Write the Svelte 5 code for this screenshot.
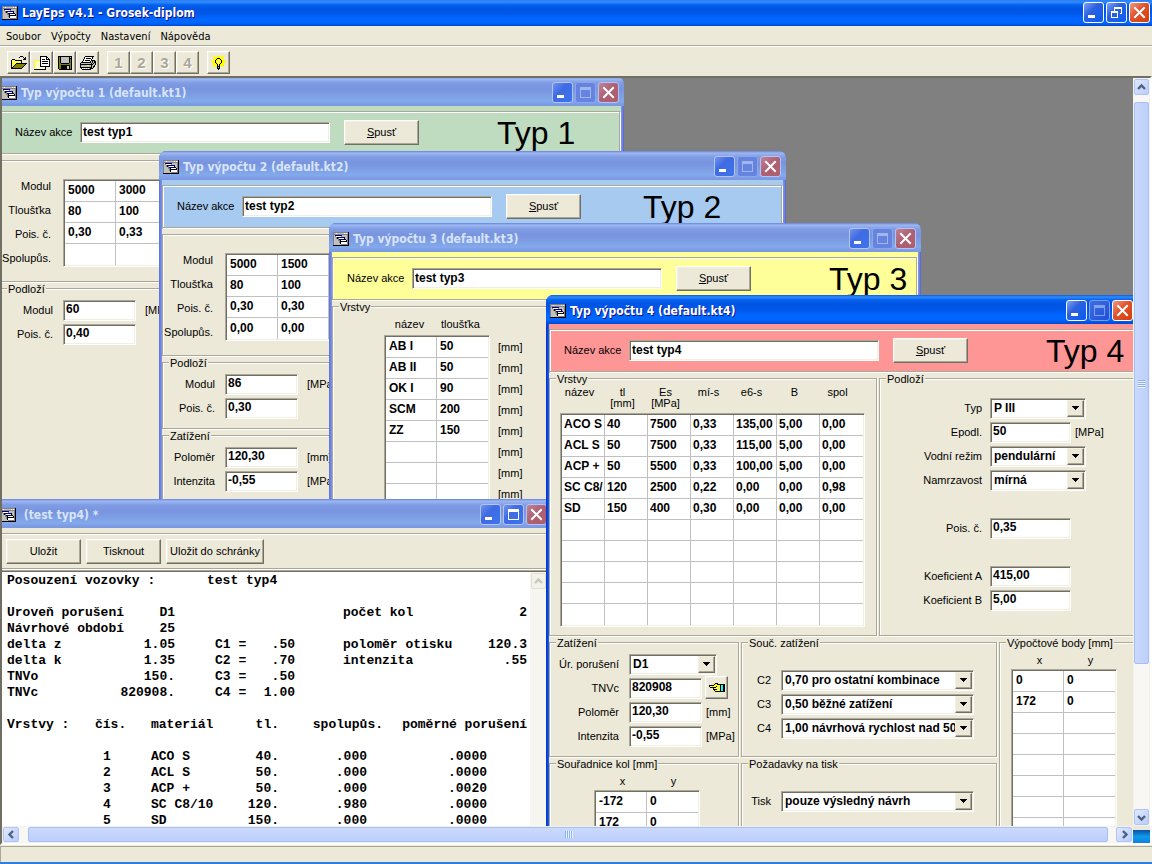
<script lang="ts">
  interface Option {
    id: string;
    label: string;
    value: string;
  }

  const palette: Record<string, string> = {
    k: '#000000',
    w: '#ffffff',
    g: '#c0c0c0',
    d: '#808080',
    o: '#808000',
    y: '#ffff00',
    l: '#ffffa0',
    n: '#000080',
    c: '#00ffff',
  };

  // small bitmaps, one character per pixel
  const sprites: Record<string, string[]> = {
    app: [
      'dddddddddddddddk',
      'dggwgggggggwgwgk',
      'dddddddddddddddk',
      'dgnnnnnnngggggdk',
      'dgdwwwwwdgggggdk',
      'dggdknnnnnnkggdk',
      'dggdkdwwwwwkggdk',
      'dggggdnnnnnnkgdk',
      'dggggddkwwwwwkdk',
      'dgggggdkkkkkkkdk',
      'dgggggdkwwwwwwdk',
      'dggggggkwwwwwwdk',
      'dgggggggdddddddk',
      'kkkkkkkkkkkkkkkk',
    ],
    open: [
      '.........kkk....',
      '........k...k.k.',
      '.............kk.',
      '.kkk........kkk.',
      'klylkkkkkkk.....',
      'kylylylylyk.....',
      'klylylylylk.....',
      'kylylkkkkkkkkkkk',
      'klylkoooooooook.',
      'kylkoooooooook..',
      'klkoooooooook...',
      'kkoooooooook....',
      'kkkkkkkkkkk.....',
    ],
    reopen: [
      '......kkkkkkk...',
      '......kwwwwwkk..',
      '......kwwwwwkwk.',
      '......kwkkkwkkkk',
      '.yyyy.kwwwwwwwwk',
      'ylwlwykwkkkkkkwk',
      'ywlwlwkwwwwwwwwk',
      'ylwlwlkwkkkkkkwk',
      'ywlwlwkwwwwwwwwk',
      'ylwlwlkwwwwwwwwk',
      'ywlwlwkkkkkkkkkk',
      'ylwlwlwlwlwk....',
      'ywlwlwlwlwlk....',
      'kkkkkkkkkkkk....',
    ],
    save: [
      'kkkkkkkkkkkkkk',
      'kokggggggggkgk',
      'kokggggggggkkk',
      'kokggggggggkok',
      'kokggggggggkok',
      'kokggggggggkok',
      'kokggggggggkok',
      'kookkkkkkkkook',
      'kooooooooooook',
      'kookkkkkkkkkok',
      'kookkkkkkggkok',
      'kookkkkkkggkok',
      'kookkkkkkggkok',
      '.kkkkkkkkkkkkk',
    ],
    print: [
      '.....kkkkkkkkk..',
      '....kwwwwwwwk...',
      '....kwkkkkkwk...',
      '...kwwwwwwwk....',
      '...kwkkkkkwkkkk.',
      '..kwwwwwwwkgkgkk',
      '.kkkkkkkkkkgkgkk',
      'kggggggggggkgkgk',
      'kkkkkkkkkkkkkggk',
      'kggggggyyggkggk.',
      'kggggggggggkgkk.',
      'kkkkkkkkkkkkgk..',
      '.kwgwgwgwgkkk...',
      '..kkkkkkkkk.....',
    ],
    bulb: [
      '.......y.......',
      '..yy..yyy..yy..',
      '..yyyyyyyyyyy..',
      '...yyykkkyyy...',
      '..yyykyyykyyy..',
      '.yyykyylyykyyy.',
      'yyyykylylykyyyy',
      '.yyykyylyykyyy.',
      '..yyykylykyyy..',
      '..yyyykykyyyy..',
      '..yyyykykyyyy..',
      '..yy..kkk..yy..',
      '......kgk......',
      '......kkk......',
      '.......k.......',
    ],
    hand: [
      '......kkk.......',
      '.....kyykkkkkkkk',
      'kkkkkyyyyyykcckk',
      'kyyyyyykylykcckk',
      '.kkkkkkyylykcckk',
      '....kylylylkcckk',
      '....kkkkylykcckk',
      '.....kylylykcckk',
      '......kkkkkkkkkk',
    ],
  };

  const menu = ['Soubor', 'Výpočty', 'Nastavení', 'Nápověda'];

  const fileTools = [
    { icon: 'open', label: 'Otevřít' },
    { icon: 'reopen', label: 'Otevřít znovu' },
    { icon: 'save', label: 'Uložit' },
    { icon: 'print', label: 'Tisknout' },
  ];

  const windows = [
    { id: 1, title: 'Typ výpočtu 1 (default.kt1)', x: -5, y: -1, w: 627, h: 440 },
    { id: 2, title: 'Typ výpočtu 2 (default.kt2)', x: 157, y: 73, w: 627, h: 380 },
    { id: 3, title: 'Typ výpočtu 3 (default.kt3)', x: 327, y: 145, w: 592, h: 380 },
    { id: 5, title: '\u00a0(test typ4) *', x: -6, y: 421, w: 556, h: 380 },
    { id: 4, title: 'Typ výpočtu 4 (default.kt4)', x: 544, y: 217, w: 592, h: 620 },
  ];

  const layerLabels = ['Modul', 'Tloušťka', 'Pois. č.', 'Spolupůs.'];
  const layers1 = [
    ['5000', '3000', ''],
    ['80', '100', ''],
    ['0,30', '0,33', ''],
    ['', '', ''],
  ];
  const layers2 = [
    ['5000', '1500', ''],
    ['80', '100', ''],
    ['0,30', '0,30', ''],
    ['0,00', '0,00', ''],
  ];
  const layers3 = pad([['AB I', '50'], ['AB II', '50'], ['OK I', '90'], ['SCM', '200'], ['ZZ', '150']], 10, 2);
  const layers4 = pad(
    [
      ['ACO S', '40', '7500', '0,33', '135,00', '5,00', '0,00'],
      ['ACL S', '50', '7500', '0,33', '115,00', '5,00', '0,00'],
      ['ACP +', '50', '5500', '0,33', '100,00', '5,00', '0,00'],
      ['SC C8/', '120', '2500', '0,22', '0,00', '0,00', '0,98'],
      ['SD', '150', '400', '0,30', '0,00', '0,00', '0,00'],
    ],
    10,
    7,
  );
  const heads4 = ['název', 'tl\n[mm]', 'Es\n[MPa]', 'mí-s', 'e6-s', 'B', 'spol'];
  const wheels = pad([['-172', '0'], ['172', '0']], 6, 2);
  const points = pad([['0', '0'], ['172', '0']], 10, 2);

  const coefs: Option[] = [
    { id: 'c2', label: 'C2', value: '0,70 pro ostatní kombinace' },
    { id: 'c3', label: 'C3', value: '0,50 běžné zatížení' },
    { id: 'c4', label: 'C4', value: '1,00 návrhová rychlost nad 50' },
  ];

  const summary = [
    ['Uroveň porušení', 'D1', '', '', 'počet kol', '2'],
    ['Návrhové období', '25', '', '', '', ''],
    ['delta z', '1.05', 'C1 =', '.50', 'poloměr otisku', '120.3'],
    ['delta k', '1.35', 'C2 =', '.70', 'intenzita', '.55'],
    ['TNVo', '150.', 'C3 =', '.50', '', ''],
    ['TNVc', '820908.', 'C4 =', '1.00', '', ''],
  ];
  const results = [
    ['1', 'ACO S', '40.', '.000', '.0000'],
    ['2', 'ACL S', '50.', '.000', '.0000'],
    ['3', 'ACP +', '50.', '.000', '.0020'],
    ['4', 'SC C8/10', '120.', '.980', '.0000'],
    ['5', 'SD', '150.', '.000', '.0000'],
  ];

  function pad(rows: string[][], count: number, cols: number) {
    const empty = Array.from({ length: count - rows.length }, () => Array(cols).fill(''));
    return [...rows, ...empty];
  }
</script>

{#snippet sprite(name: string)}
  {@const rows = sprites[name]}
  <svg class="sprite" width={rows[0].length} height={rows.length} shape-rendering="crispEdges" aria-hidden="true">
    {#each rows as row, y}
      {#each row as px, x}
        {#if px !== '.'}
          <rect {x} {y} width="1" height="1" fill={palette[px]} />
        {/if}
      {/each}
    {/each}
  </svg>
{/snippet}

{#snippet captionButtons(middle: string, disabled: boolean)}
  <div class="caption-buttons">
    <button class="cap" aria-label="Minimalizovat">
      <svg width="19" height="19" shape-rendering="crispEdges"><rect x="4" y="12" width="7" height="3" fill="#fff" /></svg>
    </button>
    <button class="cap" {disabled} aria-label={middle === 'max' ? 'Maximalizovat' : 'Obnovit'}>
      <svg width="19" height="19" shape-rendering="crispEdges" fill="#fff">
        {#if middle === 'max'}
          <path d="M4 4h11v11H4zM5 7v7h9V7z" fill-rule="evenodd" />
        {:else}
          <path d="M7 4h8v7h-2v-1h1V6H8v2H7zM4 8h7v7H4zM5 10v4h5v-4z" fill-rule="evenodd" />
        {/if}
      </svg>
    </button>
    <button class="cap close" aria-label="Zavřít">
      <svg width="19" height="19"><path d="M5 5l9 9M14 5l-9 9" stroke="#fff" stroke-width="2" fill="none" stroke-linecap="square" /></svg>
    </button>
  </div>
{/snippet}

{#snippet chevron(dir: string)}
  <svg class="chevron {dir}" width="9" height="9" aria-hidden="true">
    <path d="M1 6l3.5-3.5L8 6" fill="none" stroke="currentColor" stroke-width="2.4" />
  </svg>
{/snippet}

{#snippet field(id: string, label: string, value: string, unit: string)}
  <div class="field">
    <label for={id}>{label}</label>
    <input {id} {value} />
    {#if unit}<span class="unit">{unit}</span>{/if}
  </div>
{/snippet}

{#snippet combo(id: string, label: string, value: string)}
  <div class="field">
    <label for={id}>{label}</label>
    <div class="combo">
      <select {id}><option>{value}</option></select>
      <span class="arrow">
        <svg width="7" height="4" shape-rendering="crispEdges" aria-hidden="true"><path d="M0 0h7v1H6v1H5v1H4v1H3V3H2V2H1V1H0z" /></svg>
      </span>
    </div>
  </div>
{/snippet}

{#snippet cells(rows: string[][], narrow: boolean)}
  <div class="cells" class:narrow>
    <table>
      <tbody>
        {#each rows as row}
          <tr>
            {#each row as cell}<td>{cell}</td>{/each}
          </tr>
        {/each}
      </tbody>
    </table>
  </div>
{/snippet}

{#snippet banner(n: number)}
  <div class="banner tone-{n}">
    <div class="etched banner-row">
      <label for="name-{n}">Název akce</label>
      <input id="name-{n}" value="test typ{n}" />
      <button class="push"><span><u>S</u>pusť</span></button>
      <span class="kind">Typ {n}</span>
    </div>
  </div>
{/snippet}

{#snippet layerForm(rows: string[][])}
  <div class="etched group layers">
    <div class="row-labels">
      {#each layerLabels as label}<span>{label}</span>{/each}
    </div>
    {@render cells(rows, false)}
  </div>
{/snippet}

<div class="app">
  <header class="titlebar main">
    {@render sprite('app')}
    <h1>LayEps v4.1 - Grosek-diplom</h1>
    {@render captionButtons('restore', false)}
  </header>

  <nav class="menu">
    {#each menu as item}<a href="#{item}">{item}</a>{/each}
  </nav>

  <div class="toolbar">
    <div class="tools">
      {#each fileTools as tool}
        <button class="tool" aria-label={tool.label}>{@render sprite(tool.icon)}</button>
      {/each}
    </div>
    <div class="tools">
      {#each [1, 2, 3, 4] as n}
        <button class="tool" disabled>{n}</button>
      {/each}
    </div>
    <div class="tools">
      <button class="tool" aria-label="Nápověda">{@render sprite('bulb')}</button>
    </div>
  </div>

  <main class="workspace">
    <div class="desktop">
      {#each windows as win (win.id)}
        <section
          class="window"
          class:active={win.id === 4}
          style="left: {win.x}px; top: {win.y}px; width: {win.w}px; height: {win.h}px"
        >
          <div class="titlebar">
            {@render sprite('app')}
            <h2>{win.title}</h2>
            {@render captionButtons('max', win.id !== 5)}
          </div>

          <div class="body body-{win.id}">
            {#if win.id !== 5}
              {@render banner(win.id)}
            {/if}

            {#if win.id === 1}
              {@render layerForm(layers1)}
              <div class="etched group sub">
                <span class="caption">Podloží</span>
                {@render field('base1', 'Modul', '60', '[MPa]')}
                {@render field('pois1', 'Pois. č.', '0,40', '')}
              </div>
            {:else if win.id === 2}
              {@render layerForm(layers2)}
              <div class="etched group sub short">
                <span class="caption">Podloží</span>
                {@render field('base2', 'Modul', '86', '[MPa]')}
                {@render field('pois2', 'Pois. č.', '0,30', '')}
              </div>
              <div class="etched group sub">
                <span class="caption">Zatížení</span>
                {@render field('radius2', 'Poloměr', '120,30', '[mm]')}
                {@render field('load2', 'Intenzita', '-0,55', '[MPa]')}
              </div>
            {:else if win.id === 3}
              <div class="etched group list">
                <span class="caption">Vrstvy</span>
                <div class="heads"><span>název</span><span>tloušťka</span></div>
                <div class="list-row">
                  {@render cells(layers3, false)}
                  <div class="units">
                    {#each layers3 as _}<span>[mm]</span>{/each}
                  </div>
                </div>
              </div>
            {:else if win.id === 4}
              <div class="upper">
                <div class="etched group materials">
                  <span class="caption">Vrstvy</span>
                  <div class="heads narrow">
                    {#each heads4 as head}<span>{head}</span>{/each}
                  </div>
                  {@render cells(layers4, true)}
                </div>
                <div class="etched group subsoil">
                  <span class="caption">Podloží</span>
                  {@render combo('soil', 'Typ', 'P III')}
                  {@render field('epodl', 'Epodl.', '50', '[MPa]')}
                  {@render combo('water', 'Vodní režim', 'pendulární')}
                  {@render combo('frost', 'Namrzavost', 'mírná')}
                  <div class="apart">{@render field('pois4', 'Pois. č.', '0,35', '')}</div>
                  <div class="apart">
                    {@render field('ka', 'Koeficient A', '415,00', '')}
                    {@render field('kb', 'Koeficient B', '5,00', '')}
                  </div>
                </div>
              </div>
              <div class="lower">
                <div class="quads">
                  <div class="etched group sub load">
                    <span class="caption">Zatížení</span>
                    {@render combo('damage', 'Úr. porušení', 'D1')}
                    <div class="with-button">
                      {@render field('tnvc', 'TNVc', '820908', '')}
                      <button class="tool" aria-label="TNVc">{@render sprite('hand')}</button>
                    </div>
                    {@render field('radius4', 'Poloměr', '120,30', '[mm]')}
                    {@render field('load4', 'Intenzita', '-0,55', '[MPa]')}
                  </div>
                  <div class="etched group choices">
                    <span class="caption">Souč. zatížení</span>
                    {#each coefs as c}{@render combo(c.id, c.label, c.value)}{/each}
                  </div>
                  <div class="etched group coords wheels">
                    <span class="caption">Souřadnice kol [mm]</span>
                    <div class="heads"><span>x</span><span>y</span></div>
                    {@render cells(wheels, false)}
                  </div>
                  <div class="etched group choices">
                    <span class="caption">Požadavky na tisk</span>
                    {@render combo('printing', 'Tisk', 'pouze výsledný návrh')}
                  </div>
                </div>
                <div class="etched group coords">
                  <span class="caption">Výpočtové body [mm]</span>
                  <div class="heads"><span>x</span><span>y</span></div>
                  {@render cells(points, false)}
                </div>
              </div>
            {:else}
              <div class="etched actions">
                <button class="push">Uložit</button>
                <button class="push">Tisknout</button>
                <button class="push wide">Uložit do schránky</button>
              </div>
              <div class="memo">
                <div class="report">
                  <p class="subject"><span>Posouzení vozovky :</span><span>test typ4</span></p>
                  {#each summary as line}
                    <p class="line">
                      <span class="pair first"><span>{line[0]}</span><span>{line[1]}</span></span>
                      <span class="pair second"><span>{line[2]}</span><span>{line[3]}</span></span>
                      <span class="pair third"><span>{line[4]}</span><span>{line[5]}</span></span>
                    </p>
                  {/each}
                  <table>
                    <thead>
                      <tr>
                        <th class="section">Vrstvy :</th>
                        <th class="no">čís.</th>
                        <th class="mat">materiál</th>
                        <th class="thick">tl.</th>
                        <th class="bond">spolupůs.</th>
                        <th class="rel">poměrné porušení</th>
                      </tr>
                    </thead>
                    <tbody>
                      {#each results as row}
                        <tr>
                          <td></td>
                          <td class="no">{row[0]}</td>
                          <td>{row[1]}</td>
                          <td class="thick">{row[2]}</td>
                          <td class="bond">{row[3]}</td>
                          <td class="rel">{row[4]}</td>
                        </tr>
                      {/each}
                    </tbody>
                  </table>
                </div>
                <div class="memo-scroll">
                  <button class="scroll-btn" disabled aria-label="Nahoru">{@render chevron('up')}</button>
                </div>
              </div>
            {/if}
          </div>
        </section>
      {/each}
    </div>

    <div class="scrollbar vertical">
      <button class="scroll-btn" aria-label="Nahoru">{@render chevron('up')}</button>
      <div class="track"><div class="thumb"><i></i><i></i><i></i><i></i></div></div>
      <button class="scroll-btn" aria-label="Dolů">{@render chevron('down')}</button>
    </div>
    <div class="scrollbar horizontal">
      <button class="scroll-btn" aria-label="Vlevo">{@render chevron('left')}</button>
      <div class="track"><div class="thumb"><i></i><i></i><i></i><i></i></div></div>
      <button class="scroll-btn" aria-label="Vpravo">{@render chevron('right')}</button>
    </div>
    <div class="corner"></div>
  </main>

  <footer class="status"></footer>
</div>

<style>
  :global(body) {
    background: #ece9d8;
  }

  .app {
    --face: #ece9d8;
    --shadow: #aca899;
    --dark: #716f64;
    --light: #f1efe2;
    display: flex;
    flex-direction: column;
    height: 100vh;
    background: var(--face);
    color: #000;
    font: 11px/13px 'Liberation Sans', Arial, sans-serif;
    overflow: hidden;
  }

  .app :global(*) {
    box-sizing: border-box;
  }

  h1,
  h2,
  p {
    margin: 0;
  }

  button,
  input,
  select {
    font: inherit;
    color: inherit;
    margin: 0;
    padding: 0;
    border-radius: 0;
    outline: none;
  }

  .sprite {
    display: block;
    flex-shrink: 0;
  }

  /* caption bars */
  .titlebar {
    display: flex;
    align-items: center;
    gap: 4px;
    height: 29px;
    flex-shrink: 0;
    margin: 0 -3px;
    padding: 2px 5px 0 4px;
    color: #d8e4f8;
    background: linear-gradient(#6680dc 0, #9db8f0 2px, #7f9ce4 6px, #7894df 12px, #7d9ee4 18px, #84a9ec 24px, #7b99e1 28px);
  }

  .titlebar h1,
  .titlebar h2 {
    flex: 1;
    font: bold 12px/16px 'DejaVu Sans Condensed', 'DejaVu Sans', sans-serif;
    white-space: nowrap;
  }

  .active .titlebar,
  .titlebar.main {
    color: #fff;
    text-shadow: 1px 1px 0 #0f1089;
    background: linear-gradient(#0b58e0 0, #2f8cff 2px, #0560ee 5px, #0054e3 9px, #0058ea 15px, #0066ff 20px, #0066fe 25px, #0046d0 29px);
  }

  .titlebar.main {
    height: 26px;
    margin: 0;
    padding: 0 2px 1px;
    background: linear-gradient(#2a7df5 0, #2f8cff 2px, #0560ee 5px, #0054e3 9px, #0058ea 14px, #0066ff 18px, #0066fe 23px, #0046d0 26px);
  }

  .caption-buttons {
    display: flex;
    gap: 2px;
  }

  .cap {
    display: flex;
    width: 21px;
    height: 21px;
    border: 1px solid #b4c4f2;
    border-radius: 3px;
    background: linear-gradient(135deg, #6f93f0, #3f6be2 40%, #3d74ee);
  }

  .cap.close {
    background: linear-gradient(135deg, #c08296, #ad5f73 50%, #b05f6c);
  }

  .cap svg {
    flex-shrink: 0;
  }

  .active .cap,
  .main .cap {
    border-color: #fff;
    background: linear-gradient(135deg, #7da2f5, #2d61e0 40%, #0a5cf0);
  }

  .active .cap.close,
  .main .cap.close {
    background: linear-gradient(135deg, #f09a80, #e0512b 45%, #d63c0c);
  }

  .cap:disabled {
    border-color: #8fa5e8;
    background: #6484e0;
  }

  .active .cap:disabled {
    border-color: #7c9cf0;
    background: linear-gradient(135deg, #3d6fe6, #1e50d4);
  }

  .cap:disabled svg {
    opacity: 0.4;
  }

  .menu {
    display: flex;
    gap: 10px;
    height: 21px;
    flex-shrink: 0;
    padding: 4px 6px 0;
    border-bottom: 1px solid #fff;
    box-shadow: inset 0 -1px 0 var(--shadow);
    font-family: 'DejaVu Sans Condensed', 'DejaVu Sans', sans-serif;
  }

  .menu a {
    color: #000;
    text-decoration: none;
  }

  .toolbar {
    display: flex;
    gap: 8px;
    height: 29px;
    flex-shrink: 0;
    padding: 4px 7px 0;
  }

  .tools {
    display: flex;
  }

  .tool,
  .push {
    display: flex;
    align-items: center;
    justify-content: center;
    border: 1px solid;
    border-color: #fff var(--dark) var(--dark) #fff;
    box-shadow: inset -1px -1px 0 var(--shadow), inset 1px 1px 0 var(--light);
    background: var(--face);
  }

  .tool {
    width: 23px;
    height: 23px;
    font-size: 15px;
    font-weight: bold;
  }

  .tool:disabled {
    color: var(--shadow);
    text-shadow: 1px 1px 0 #fff;
  }

  .push {
    width: 75px;
    height: 25px;
  }

  .push.wide {
    width: 98px;
    white-space: nowrap;
  }

  /* MDI area */
  .workspace {
    flex: 1;
    min-height: 0;
    display: grid;
    grid-template: minmax(0, 1fr) 17px / minmax(0, 1fr) 17px;
    border: 2px solid;
    border-color: var(--dark) #fff #fff var(--dark);
  }

  .desktop {
    position: relative;
    overflow: hidden;
    background: #808080;
  }

  .window {
    position: absolute;
    display: flex;
    flex-direction: column;
    padding: 0 3px 3px;
    border-radius: 7px 7px 0 0;
    background: linear-gradient(90deg, #6277d8 1px, #7b90e2 2px calc(100% - 2px), #5361c8);
    overflow: hidden;
  }

  .window.active {
    background: linear-gradient(90deg, #0733d6 1px, #0f5cee 2px calc(100% - 2px), #0733d6);
  }

  .body {
    flex: 1;
    min-height: 0;
    display: flex;
    flex-direction: column;
    background: var(--face);
    overflow: hidden;
  }

  .etched {
    border: 1px solid var(--shadow);
    box-shadow: 1px 1px 0 #fff, inset 1px 1px 0 #fff;
  }

  .banner {
    flex-shrink: 0;
    padding: 5px 1px 1px 0;
    margin-bottom: 5px;
  }

  .tone-1 { background: #c0dcc0; }
  .tone-2 { background: #a6caf0; }
  .tone-3 { background: #ffff99; }
  .tone-4 { background: #ff9696; }

  .banner-row {
    display: flex;
    align-items: center;
    height: 43px;
    padding-left: 14px;
  }

  .banner-row label {
    width: 65px;
  }

  .banner-row input {
    width: 250px;
    margin-right: 14px;
  }

  .kind {
    margin-left: 78px;
    font-size: 32px;
    line-height: 34px;
    white-space: nowrap;
  }

  .body-2 .kind {
    margin-left: 62px;
  }

  input,
  .combo,
  .cells {
    border: 1px solid;
    border-color: var(--shadow) #fff #fff var(--shadow);
    box-shadow: inset 1px 1px 0 var(--dark), inset -1px -1px 0 var(--light);
    background: #fff;
    font-size: 12px;
    font-weight: bold;
  }

  input {
    height: 21px;
    padding: 0 2px 2px;
  }

  .group {
    position: relative;
    flex-shrink: 0;
  }

  .caption {
    position: absolute;
    top: -6px;
    left: 6px;
    padding: 0 1px;
    background: var(--face);
    line-height: 13px;
    white-space: nowrap;
  }

  .layers {
    display: flex;
    gap: 12px;
    height: 122px;
    padding: 18px 0 0 1px;
    margin-bottom: 6px;
  }

  .row-labels {
    width: 49px;
    display: flex;
    flex-direction: column;
    align-items: flex-end;
    line-height: 24px;
    margin-top: -5px;
  }

  .row-labels span {
    white-space: nowrap;
  }

  .sub {
    flex-grow: 1;
    padding-top: 9px;
  }

  .sub.short {
    flex-grow: 0;
    height: 67px;
    margin-bottom: 6px;
  }

  .field {
    display: flex;
    align-items: center;
    height: 24px;
  }

  .field label {
    width: 52px;
    margin-right: 10px;
    text-align: right;
    white-space: nowrap;
  }

  .field input {
    width: 73px;
  }

  .unit {
    margin-left: 9px;
  }

  .combo {
    display: grid;
    grid-template-columns: minmax(0, 1fr);
    width: 88px;
    height: 21px;
    padding: 1px;
  }

  .combo select {
    grid-area: 1 / 1;
    appearance: none;
    width: 100%;
    padding: 0 17px 0 2px;
    border: 0;
    background: transparent;
    line-height: 16px;
  }

  .arrow {
    grid-area: 1 / 1;
    justify-self: end;
    display: flex;
    align-items: center;
    justify-content: center;
    width: 17px;
    border: 1px solid;
    border-color: var(--light) var(--dark) var(--dark) var(--light);
    box-shadow: inset -1px -1px 0 var(--shadow);
    background: var(--face);
    pointer-events: none;
  }

  .cells {
    align-self: flex-start;
    width: max-content;
    padding: 1px;
  }

  .cells table {
    border-spacing: 0;
  }

  .cells td {
    height: 21px;
    min-width: 51px;
    max-width: 51px;
    padding: 0 0 2px 3px;
    border: solid #c0c0c0;
    border-width: 0 1px 1px 0;
    line-height: 16px;
    white-space: nowrap;
    overflow: hidden;
  }

  .cells.narrow td {
    min-width: 43px;
    max-width: 43px;
    padding-left: 2px;
  }

  .cells td:last-child {
    border-right: 0;
  }

  .cells tr:last-child td {
    border-bottom: 0;
  }

  .heads {
    display: grid;
    grid-template-columns: repeat(2, 51px);
    text-align: center;
    white-space: pre-line;
  }

  .heads.narrow {
    grid-template-columns: repeat(7, 43px);
    line-height: 11px;
  }

  .list {
    flex-grow: 1;
    padding: 11px 0 0 51px;
  }

  .list .heads {
    height: 17px;
  }

  .list-row {
    display: flex;
    gap: 8px;
  }

  .units {
    display: flex;
    flex-direction: column;
    line-height: 21px;
    padding-top: 2px;
  }

  .upper,
  .lower {
    display: flex;
    gap: 2px;
    margin-right: -1px;
  }

  .upper {
    height: 258px;
    flex-shrink: 0;
    margin-bottom: 6px;
  }

  .materials {
    width: 328px;
    padding: 8px 0 0 10px;
  }

  .materials .heads {
    height: 26px;
    margin-left: -2px;
  }

  .subsoil {
    flex: 1;
    padding-top: 17px;
  }

  .subsoil label {
    width: 102px;
    margin-right: 8px;
  }

  .subsoil input {
    width: 81px;
  }

  .subsoil .combo {
    width: 96px;
  }

  .subsoil .unit {
    margin-left: 4px;
  }

  .apart {
    margin-top: 24px;
  }

  .lower {
    flex: 1;
  }

  .quads {
    display: grid;
    grid-template: 115px 1fr / 190px 256px;
    gap: 6px 2px;
  }

  .load label {
    width: 69px;
  }

  .load .unit {
    margin-left: 4px;
  }

  .with-button {
    display: flex;
    gap: 3px;
  }

  .choices {
    padding-top: 25px;
  }

  .choices label {
    width: 29px;
  }

  .choices .combo {
    width: 193px;
  }

  .coords {
    flex: 1;
    padding: 11px 0 0 11px;
  }

  .wheels {
    padding-left: 44px;
  }

  .coords .heads {
    height: 15px;
    margin-left: 3px;
  }

  /* report window */
  .actions {
    display: flex;
    align-items: center;
    gap: 5px;
    height: 36px;
    margin: 5px 0 1px;
    padding-left: 6px;
    flex-shrink: 0;
  }

  .memo {
    flex: 1;
    display: flex;
    border: 1px solid var(--shadow);
    box-shadow: inset 1px 1px 0 var(--dark);
    background: #fff;
    padding: 1px 0 0 1px;
  }

  .report {
    width: 529px;
    padding: 1px 0 0 6px;
    font: bold 13px/16px 'Liberation Mono', 'Courier New', monospace;
    white-space: nowrap;
  }

  .subject {
    display: flex;
    height: 32px;
  }

  .subject span:first-child {
    width: 200px;
  }

  .line {
    display: flex;
    height: 16px;
  }

  .pair {
    display: flex;
    justify-content: space-between;
  }

  .first {
    width: 168px;
    margin-right: 40px;
  }

  .second {
    width: 80px;
    margin-right: 48px;
  }

  .third {
    width: 184px;
  }

  .report table {
    table-layout: fixed;
    width: 520px;
    margin-top: 16px;
    border-spacing: 0;
    text-align: left;
  }

  .report th,
  .report td {
    padding: 0;
    height: 16px;
  }

  .report th {
    height: 32px;
    vertical-align: top;
  }

  .section { width: 88px; }
  .no { width: 56px; }
  .mat { width: 72px; }
  .report .thick { width: 56px; text-align: right; }
  .report .bond { width: 104px; text-align: right; }
  .report .rel { width: 144px; text-align: right; }
  .report td.no { padding-left: 8px; }
  .report td.bond { padding-right: 16px; }
  .report td.rel { padding-right: 40px; }

  .memo-scroll {
    width: 17px;
    padding: 1px;
    background: #f6f5f0;
  }

  /* scroll bars */
  .scrollbar {
    display: flex;
    border: 1px solid #f3f1ec;
    background: #f8f7f3;
  }

  .vertical {
    flex-direction: column;
  }

  .scroll-btn {
    display: flex;
    align-items: center;
    justify-content: center;
    flex-shrink: 0;
    width: 15px;
    height: 16px;
    border: 1px solid #b0c4f4;
    border-radius: 2px;
    background: linear-gradient(135deg, #dfe8fe, #b9cdfb);
    color: #4d6185;
  }

  .horizontal .scroll-btn {
    width: 16px;
    height: 15px;
  }

  .scroll-btn:disabled {
    border-color: #e2e0d6;
    background: #f3f2ea;
    color: #c9c7ba;
  }

  .chevron.down { transform: rotate(180deg); }
  .chevron.left { transform: rotate(-90deg); }
  .chevron.right { transform: rotate(90deg); }

  .track {
    flex: 1;
    display: flex;
  }

  .vertical .track {
    flex-direction: column;
    padding: 7px 0 145px;
  }

  .horizontal .track {
    padding: 0 8px 0 9px;
  }

  .thumb {
    flex: 1;
    display: flex;
    gap: 1px;
    align-items: center;
    justify-content: center;
    border: 1px solid #a8bff2;
    border-radius: 2px;
    background: linear-gradient(90deg, #cbd9fc, #bccffc);
  }

  .vertical .thumb {
    flex-direction: column;
  }

  .horizontal .thumb {
    background: linear-gradient(#cbd9fc, #bccffc);
  }

  .thumb i {
    width: 7px;
    height: 1px;
    background: #8caff5;
    box-shadow: 0 1px 0 #eef4fe;
  }

  .horizontal .thumb i {
    width: 1px;
    height: 7px;
    box-shadow: 1px 0 0 #eef4fe;
  }

  .corner {
    margin-top: 4px;
    background: linear-gradient(#0a50a8, #0f9ae8 50%, #0f80e0);
  }

  .status {
    height: 19px;
    flex-shrink: 0;
    border-bottom: 2px solid #2f7fe0;
    box-shadow: inset 0 1px 0 var(--face), inset 1px 2px 0 var(--shadow);
  }
</style>
